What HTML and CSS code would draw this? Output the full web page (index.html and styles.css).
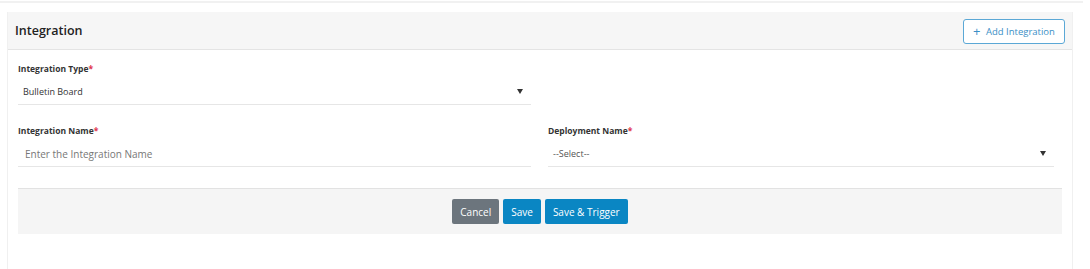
FILE: index.html
```html
<!DOCTYPE html>
<html lang="en">
<head>
  <meta charset="UTF-8">
  <meta name="viewport" content="width=device-width, initial-scale=1.0">
  <title>Integration</title>
  <link rel="stylesheet" href="styles.css">
</head>
<body>
  <div class="top-rule"></div>

  <section class="card">
    <header class="card-header">
      <h1>Integration</h1>
      <button class="btn-outline" type="button"><span class="plus">+</span> Add Integration</button>
    </header>

    <form class="card-body">
      <div class="form-row">
        <div class="form-group">
          <label>Integration Type<span class="req">*</span></label>
          <div class="select">
            <span>Bulletin Board</span>
            <span class="caret"></span>
          </div>
        </div>
      </div>

      <div class="form-row">
        <div class="form-group">
          <label>Integration Name<span class="req">*</span></label>
          <input type="text" class="text-input" placeholder="Enter the Integration Name">
        </div>
        <div class="form-group">
          <label>Deployment Name<span class="req">*</span></label>
          <div class="select">
            <span class="muted">--Select--</span>
            <span class="caret"></span>
          </div>
        </div>
      </div>

      <div class="form-footer">
        <button type="button" class="btn btn-grey">Cancel</button>
        <button type="submit" class="btn btn-blue">Save</button>
        <button type="button" class="btn btn-blue">Save &amp; Trigger</button>
      </div>
    </form>
  </section>
</body>
</html>
```

FILE: styles.css
```css
body {
  margin: 0;
  font-family: "Open Sans", "Noto Sans", Arial, sans-serif;
  background-color: #fff;
  color: #333;
}

.top-rule {
  width: 1083px;
  height: 2px;
  margin-top: 1px;
  background-color: #f1f1f1;
}

.card {
  width: 1064px;
  margin: 9px 0 0 7px;
  border-left: 1px solid #f0f0f0;
  border-right: 1px solid #f0f0f0;
  height: 260px;
}

.card-header {
  height: 37px;
  background-color: #f6f6f6;
  border-bottom: 1px solid #e4e4e4;
  display: flex;
  align-items: center;
  justify-content: space-between;
  padding: 0 7px;
}

.card-header h1 {
  margin: 0;
  font-size: 12.5px;
  font-weight: 600;
  color: #222;
}

.btn-outline {
  height: 25px;
  width: 102px;
  margin-top: 1px;
  background: #fff;
  border: 1px solid #5ba8d6;
  border-radius: 3px;
  color: #3a8fc6;
  font-family: inherit;
  font-size: 9.5px;
  padding: 0;
}

.btn-outline .plus {
  font-size: 13px;
  line-height: 1;
  margin-right: 3px;
  vertical-align: -1px;
}

.card-body {
  padding: 13px 10px 0 10px;
}

.form-row {
  display: grid;
  grid-template-columns: 513px 506px;
  column-gap: 17px;
  margin-bottom: 20px;
}

label {
  display: block;
  font-size: 8.5px;
  font-weight: bold;
  color: #333;
  margin-bottom: 5px;
}

.req {
  color: #e0334a;
}

.select {
  height: 25px;
  border-bottom: 1px solid #e6e6e6;
  display: flex;
  align-items: center;
  justify-content: space-between;
  padding: 0 8px 0 5px;
  font-size: 9px;
  color: #333;
}

.select .muted {
  color: #555;
}

.caret {
  width: 0;
  height: 0;
  border-left: 3px solid transparent;
  border-right: 3px solid transparent;
  border-top: 5px solid #333;
}

.text-input {
  display: block;
  width: 100%;
  box-sizing: border-box;
  height: 26px;
  border: none;
  border-bottom: 1px solid #e6e6e6;
  padding: 0 7px;
  font-family: inherit;
  font-size: 10px;
  outline: none;
}

.text-input::placeholder {
  color: #777;
}

.form-footer {
  margin-top: 21px;
  width: 1044px;
  height: 45px;
  background-color: #f5f5f5;
  border-top: 1px solid #e2e2e2;
  display: flex;
  justify-content: center;
  align-items: center;
  gap: 4px;
}

.btn {
  height: 25px;
  border: none;
  border-radius: 2px;
  color: #fff;
  font-family: inherit;
  font-size: 10px;
  padding: 0 8px;
}

.btn-grey {
  background-color: #6c757d;
}

.btn-blue {
  background-color: #0a86c3;
}
```
